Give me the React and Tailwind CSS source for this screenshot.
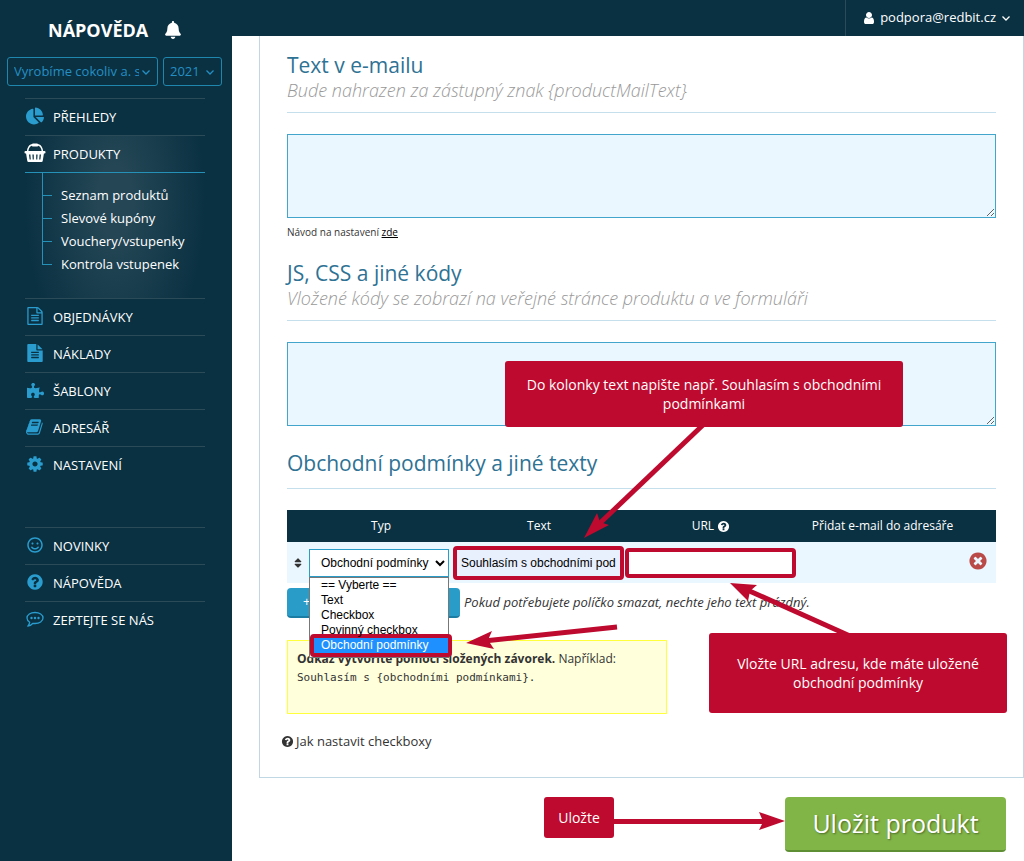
import React from 'react';
import { FaBell, FaChartPie, FaPuzzlePiece, FaRegSmile, FaSort } from 'react-icons/fa';

const Glyph = ({ d, className }) => (
  <svg viewBox="0 0 1792 1792" fill="currentColor" className={className} aria-hidden="true">
    <path d={d} />
  </svg>
);

const paths = {
  file: 'M1596 380q28 28 48 76t20 88v1152q0 40-28 68t-68 28h-1344q-40 0-68-28t-28-68v-1600q0-40 28-68t68-28h896q40 0 88 20t76 48zm-444-244v376h376q-10-29-22-41l-313-313q-12-12-41-22zm384 1528v-1024h-416q-40 0-68-28t-28-68v-416h-768v1536h1280zm-1024-864q0-14 9-23t23-9h704q14 0 23 9t9 23v64q0 14-9 23t-23 9h-704q-14 0-23-9t-9-23v-64zm736 224q14 0 23 9t9 23v64q0 14-9 23t-23 9h-704q-14 0-23-9t-9-23v-64q0-14 9-23t23-9h704zm0 256q14 0 23 9t9 23v64q0 14-9 23t-23 9h-704q-14 0-23-9t-9-23v-64q0-14 9-23t23-9h704z',
  fileSolid: 'M1596 476q14 14 28 36h-472v-472q22 14 36 28zm-476 164h544v1056q0 40-28 68t-68 28h-1344q-40 0-68-28t-28-68v-1600q0-40 28-68t68-28h800v544q0 40 28 68t68 28zm160 736v-64q0-14-9-23t-23-9h-704q-14 0-23 9t-9 23v64q0 14 9 23t23 9h704q14 0 23-9t9-23zm0-256v-64q0-14-9-23t-23-9h-704q-14 0-23 9t-9 23v64q0 14 9 23t23 9h704q14 0 23-9t9-23zm0-256v-64q0-14-9-23t-23-9h-704q-14 0-23 9t-9 23v64q0 14 9 23t23 9h704q14 0 23-9t9-23z',
  book: 'M1639 478q40 57 18 129l-275 906q-19 64-76.5 107.5t-122.5 43.5h-923q-77 0-148.5-53.5t-99.5-131.5q-24-67-2-127 0-4 3-27t4-37q1-8-3-21.5t-3-19.5q2-11 8-21t16.5-23.5 16.5-23.5q23-38 45-91.5t30-91.5q3-10 .5-30t-.5-28q3-11 17-28t17-23q21-36 42-92t25-90q1-9-2.5-32t.5-28q4-13 22-30.5t22-22.5q19-26 42.5-84.5t27.5-96.5q1-8-3-25.5t-2-26.5q2-8 9-18t18-23 17-21q8-12 16.5-30.5t15-35 16-36 19.5-32 26.5-23.5 36-11.5 47.5 5.5l-1 3q38-9 51-9h761q74 0 114 56t18 130l-274 906q-36 119-71.5 153.5t-128.5 34.5h-869q-27 0-38 15-11 16-1 43 24 70 144 70h923q29 0 56-15.5t35-41.5l300-987q7-22 5-57 38 15 59 43zm-1064 2q-4 13 2 22.5t20 9.5h608q13 0 25.5-9.5t16.5-22.5l21-64q4-13-2-22.5t-20-9.5h-608q-13 0-25.5 9.5t-16.5 22.5zm-83 256q-4 13 2 22.5t20 9.5h608q13 0 25.5-9.5t16.5-22.5l21-64q4-13-2-22.5t-20-9.5h-608q-13 0-25.5 9.5t-16.5 22.5z',
  cog: 'M1152 896q0-106-75-181t-181-75-181 75-75 181 75 181 181 75 181-75 75-181zm512-109v222q0 12-8 23t-20 13l-185 28q-19 54-39 91 35 50 107 138 10 12 10 25t-9 23q-27 37-99 108t-94 71q-12 0-26-9l-138-108q-44 23-91 38-16 136-29 186-7 28-36 28h-222q-14 0-24.5-8.5t-11.5-21.5l-28-184q-49-16-90-37l-141 107q-10 9-25 9-14 0-25-11-126-114-165-168-7-10-7-23 0-12 8-23 15-21 51-66.5t54-70.5q-27-50-41-99l-183-27q-13-2-21-12.5t-8-23.5v-222q0-12 8-23t19-13l186-28q14-46 39-92-40-57-107-138-10-12-10-24 0-10 9-23 26-36 98.5-107.5t94.5-71.5q13 0 26 10l138 107q44-23 91-38 16-136 29-186 7-28 36-28h222q14 0 24.5 8.5t11.5 21.5l28 184q49 16 90 37l142-107q9-9 24-9 13 0 25 10 129 119 165 170 7 8 7 22 0 12-8 23-15 21-51 66.5t-54 70.5q26 50 41 98l183 28q13 2 21 12.5t8 23.5z',
  question: 'M1024 1376v-192q0-14-9-23t-23-9h-192q-14 0-23 9t-9 23v192q0 14 9 23t23 9h192q14 0 23-9t9-23zm256-672q0-88-55.5-163t-138.5-116-170-41q-243 0-371 213-15 24 8 42l132 100q7 6 19 6 16 0 25-12 53-68 86-92 34-24 86-24 48 0 85.5 26t37.5 59q0 38-20 61t-68 45q-63 28-115.5 86.5t-52.5 125.5v36q0 14 9 23t23 9h192q14 0 23-9t9-23q0-19 21.5-49.5t54.5-49.5q32-18 49-28.5t46-35 44.5-48 28-60.5 12.5-81zm384 192q0 209-103 385.5t-279.5 279.5-385.5 103-385.5-103-279.5-279.5-103-385.5 103-385.5 279.5-279.5 385.5-103 385.5 103 279.5 279.5 103 385.5z',
  times: 'M1277 1122q0-26-19-45l-181-181 181-181q19-19 19-45 0-27-19-46l-90-90q-19-19-46-19-26 0-45 19l-181 181-181-181q-19-19-45-19-27 0-46 19l-90 90q-19 19-19 46 0 26 19 45l181 181-181 181q-19 19-19 45 0 27 19 46l90 90q19 19 46 19 26 0 45-19l181-181 181 181q19 19 45 19 27 0 46-19l90-90q19-19 19-46zm387-226q0 209-103 385.5t-279.5 279.5-385.5 103-385.5-103-279.5-279.5-103-385.5 103-385.5 279.5-279.5 385.5-103 385.5 103 279.5 279.5 103 385.5z',
  user: 'M1536 1399q0 109-62.5 187t-150.5 78h-854q-88 0-150.5-78t-62.5-187q0-85 8.5-160.5t31.5-152 58.5-131 94-89 134.5-34.5q131 128 313 128t313-128q76 0 134.5 34.5t94 89 58.5 131 31.5 152 8.5 160.5zm-256-887q0 159-112.5 271.5t-271.5 112.5-271.5-112.5-112.5-271.5 112.5-271.5 271.5-112.5 271.5 112.5 112.5 271.5z',
};

const Chevron = ({ className }) => (
  <svg viewBox="0 0 10 10" className={className} aria-hidden="true">
    <path d="M1.5 3.5 L5 7 L8.5 3.5" fill="none" stroke="currentColor" strokeWidth="1.3" />
  </svg>
);

const Basket = () => (
  <svg viewBox="0 0 22 20" className="w-[22px] h-5 shrink-0 text-white" aria-hidden="true">
    <path d="M3.5 9 C4 4 5.5 2.5 7.5 2 H14.5 C16.5 2.5 18 4 18.5 9" fill="none" stroke="currentColor" strokeWidth="1.5" />
    <rect x="7.5" y="0.5" width="7" height="3" rx="1.5" fill="currentColor" />
    <rect x="0.5" y="8" width="21" height="2.5" rx="1" fill="currentColor" />
    <path
      d="M2 10 H20 L18.7 18 Q18.5 19 17.5 19 H4.5 Q3.5 19 3.3 18 Z M5 11.5 L5.6 16.5 H6.8 L6.4 11.5 Z M8.4 11.5 L8.7 16.5 H9.8 V11.5 Z M12.2 11.5 V16.5 H13.3 L13.6 11.5 Z M15.6 11.5 L15.2 16.5 H16.4 L17 11.5 Z"
      fill="currentColor"
      fillRule="evenodd"
    />
  </svg>
);

const Bubble = () => (
  <svg viewBox="0 0 18 17" className="w-[18px] h-[17px]" aria-hidden="true">
    <path d="M9 1.5 C13.5 1.5 17 3.8 17 7 S13.5 12.5 9 12.5 Q8 12.5 7 12.3 Q5 14.6 1.8 15.2 Q3.4 13.5 3.7 11.2 Q1 9.6 1 7 C1 3.8 4.5 1.5 9 1.5 Z" fill="none" stroke="currentColor" strokeWidth="1.3" strokeLinejoin="round" />
    <circle cx="5.5" cy="7" r="1.2" fill="currentColor" />
    <circle cx="9" cy="7" r="1.2" fill="currentColor" />
    <circle cx="12.5" cy="7" r="1.2" fill="currentColor" />
  </svg>
);

const mainMenu = [
  { label: 'PŘEHLEDY', icon: <FaChartPie className="w-[18px] h-[18px]" /> },
  {
    label: 'PRODUKTY',
    icon: <Basket />,
    children: ['Seznam produktů', 'Slevové kupóny', 'Vouchery/vstupenky', 'Kontrola vstupenek'],
  },
  { label: 'OBJEDNÁVKY', icon: <Glyph d={paths.file} className="w-[18px] h-[18px]" /> },
  { label: 'NÁKLADY', icon: <Glyph d={paths.fileSolid} className="w-[18px] h-[18px]" /> },
  { label: 'ŠABLONY', icon: <FaPuzzlePiece className="w-[17px] h-[17px]" /> },
  { label: 'ADRESÁŘ', icon: <Glyph d={paths.book} className="w-[18px] h-[18px]" /> },
  { label: 'NASTAVENÍ', icon: <Glyph d={paths.cog} className="w-[18px] h-[18px]" /> },
];

const helpMenu = [
  { label: 'NOVINKY', icon: <FaRegSmile className="w-4 h-4" /> },
  { label: 'NÁPOVĚDA', icon: <Glyph d={paths.question} className="w-[18px] h-[18px]" /> },
  { label: 'ZEPTEJTE SE NÁS', icon: <Bubble /> },
];

const MenuItem = ({ item }) => (
  <li
    className={
      item.children
        ? 'border-t border-[#2b4b59] bg-[radial-gradient(ellipse_50%_110%_at_50%_40%,#244655_20%,#0a3142_100%)]'
        : 'border-t border-[#2b4b59]'
    }
  >
    <a href="#" className="flex h-9 items-center pt-[2px] text-[13px] text-white">
      <span className="flex w-5 mr-2 pb-1 justify-center text-[#2a9cce]">{item.icon}</span>
      {item.label}
    </a>
    {item.children && (
      <ul className="border-t border-[#2590b8] pt-[11px] pb-[22px] pl-[17px]">
        {item.children.map((child) => (
          <li
            key={child}
            className="relative pl-[19px] before:absolute before:left-0 before:bottom-1/2 before:w-[10px] before:h-[23px] before:border-l before:border-b before:border-[#2590b8]"
          >
            <a href="#" className="block text-[13px] leading-[23px] text-white">{child}</a>
          </li>
        ))}
      </ul>
    )}
  </li>
);

const HeaderSelect = ({ label, value, className }) => (
  <div className={`relative ${className}`}>
    <select
      aria-label={label}
      className="block w-full h-[29px] appearance-none rounded-[3px] border border-[#1f86ad] bg-transparent pl-[6px] pr-[18px] text-[13px] text-[#258fc4]"
    >
      <option>{value}</option>
    </select>
    <Chevron className="pointer-events-none absolute right-[7px] top-[10px] w-[10px] h-[10px] text-[#258fc4]" />
  </div>
);

const Sidebar = () => (
  <aside className="w-[232px] shrink-0 bg-[#0a3142]">
    <div className="flex h-[57px] items-center pl-12 pt-[2px] text-white">
      <strong className="text-lg">NÁPOVĚDA</strong>
      <FaBell className="ml-4 w-[18px] h-[18px]" />
    </div>
    <div className="flex gap-[5px] pl-[7px] pr-[10px]">
      <HeaderSelect label="Firma" value="Vyrobíme cokoliv a. s." className="w-[151px]" />
      <HeaderSelect label="Rok" value="2021" className="flex-1" />
    </div>
    <nav className="mt-3 ml-[25px] mr-[27px]">
      <ul>
        {mainMenu.map((item) => <MenuItem key={item.label} item={item} />)}
      </ul>
      <ul className="mt-11">
        {helpMenu.map((item) => <MenuItem key={item.label} item={item} />)}
      </ul>
    </nav>
  </aside>
);

const SectionHeading = ({ title, hint }) => (
  <div className="mb-[21px] border-b border-[#c5dfec] pb-[11px]">
    <h2 className="text-[21px] leading-7 text-[#2e7294]">{title}</h2>
    {hint && <p className="text-lg leading-[22px] font-light italic text-[#999]">{hint}</p>}
  </div>
);

const TextArea = ({ label }) => (
  <textarea aria-label={label} className="block w-full h-[84px] border border-[#42a5cc] bg-[#ebf7ff]" />
);

const options = ['== Vyberte ==', 'Text', 'Checkbox', 'Povinný checkbox', 'Obchodní podmínky'];

const TypeSelect = () => (
  <div className="relative w-[140px] font-['Liberation_Sans',Arial,sans-serif] text-xs text-black">
    <select
      aria-label="Typ"
      defaultValue="Obchodní podmínky"
      className="block w-full h-7 border border-[#2a9cc8] bg-white pl-[7px]"
    >
      {options.map((option) => <option key={option}>{option}</option>)}
    </select>
    <ul className="absolute left-0 top-7 z-10 w-[140px] border border-[#777] bg-white leading-[15px]">
      {options.slice(0, 4).map((option) => <li key={option} className="pl-[11px]">{option}</li>)}
      <li className="-mr-1 -mt-1 rounded-[4px] border-4 border-[#bd0a2e] bg-[#1e90ff] pl-[7px] text-white">{options[4]}</li>
    </ul>
  </div>
);

const TermsTable = () => (
  <table className="w-full table-fixed border-collapse text-xs">
    <colgroup>
      <col className="w-[22px]" />
      <col className="w-[144px]" />
      <col className="w-[172px]" />
      <col className="w-[172px]" />
      <col />
      <col className="w-7" />
    </colgroup>
    <thead className="bg-[#0a3142] text-white">
      <tr className="h-8">
        <th aria-label="Pořadí" />
        <th className="font-normal">Typ</th>
        <th className="font-normal">Text</th>
        <th className="font-normal">
          URL <Glyph d={paths.question} className="inline w-[13px] h-[13px]" />
        </th>
        <th className="font-normal">Přidat e-mail do adresáře</th>
        <th aria-label="Smazat" />
      </tr>
    </thead>
    <tbody className="bg-[#ebf7ff]">
      <tr className="h-[41px]">
        <td className="p-0"><FaSort className="mx-auto w-3 h-3 text-[#333]" /></td>
        <td className="p-0"><TypeSelect /></td>
        <td className="p-0">
          <input
            aria-label="Text"
            defaultValue="Souhlasím s obchodními pod"
            className="block w-[171px] h-[34px] rounded-[4px] border-4 border-[#bd0a2e] bg-[#e8f0fe] px-1 font-['Liberation_Sans',Arial,sans-serif] text-xs text-black"
          />
        </td>
        <td className="p-0">
          <input aria-label="URL" className="block w-[171px] h-[30px] rounded-[4px] border-4 border-[#bd0a2e] bg-white px-1 text-xs" />
        </td>
        <td />
        <td className="p-0 pb-1 pr-2">
          <button type="button" aria-label="Smazat řádek" className="block text-[#b94a48]">
            <Glyph d={paths.times} className="w-5 h-5" />
          </button>
        </td>
      </tr>
    </tbody>
  </table>
);

const Callout = ({ children, className }) => (
  <div
    className={`flex items-center justify-center rounded-[3px] bg-[#bd0a2e] text-center text-sm leading-[19px] text-white ${className}`}
  >
    {children}
  </div>
);

// Tutorial arrows and notes drawn over the form
const Annotations = () => (
  <div className="pointer-events-none absolute left-0 top-0 z-20">
    <svg width="792" height="700" viewBox="232 36 792 700" className="block">
      <g stroke="#bd0a2e" strokeWidth="5">
        <line x1="704" y1="424" x2="599" y2="524" />
        <line x1="617" y1="627" x2="484" y2="641" />
        <line x1="850" y1="636" x2="745" y2="589" />
      </g>
      <g fill="#bd0a2e">
        <path d="M584 538 L597 513 L600 522 L609 525 Z" />
        <path d="M466 643 L492 631 L488 640 L494 649 Z" />
        <path d="M730 583 L757 585 L750 591 L748 601 Z" />
      </g>
    </svg>
    <Callout className="absolute left-[273px] top-[325px] w-[398px] h-[66px] px-4">
      Do kolonky text napište např. Souhlasím s obchodními podmínkami
    </Callout>
    <Callout className="absolute left-[477px] top-[597px] w-[298px] h-[80px] px-5">
      Vložte URL adresu, kde máte uložené obchodní podmínky
    </Callout>
  </div>
);

const App = () => {
  return (
    <div className="flex min-h-screen bg-white font-['Open_Sans','Noto_Sans',sans-serif] text-[#333]">
      <Sidebar />
      <div className="flex-1 min-w-0">
        <header className="flex h-9 justify-end bg-[#0a3142]">
          <button type="button" className="flex items-center border-l border-[#2b4b59] pl-4 pr-[13px] text-[13px] text-white">
            <Glyph d={paths.user} className="mr-1 w-[14px] h-[14px]" />
            podpora@redbit.cz
            <Chevron className="ml-[5px] w-[10px] h-[10px]" />
          </button>
        </header>

        <main className="relative">
          <form>
            <div className="ml-[27px] border border-t-0 border-[#c0d8e4] px-[27px] pt-[15px] pb-[26px]">
              <section>
                <SectionHeading title="Text v e-mailu" hint="Bude nahrazen za zástupný znak {productMailText}" />
                <TextArea label="Text v e-mailu" />
                <p className="mt-[7px] text-[10px] leading-[14px]">
                  Návod na nastavení <a href="#" className="text-black underline">zde</a>
                </p>
              </section>

              <section className="mt-5">
                <SectionHeading title="JS, CSS a jiné kódy" hint="Vložené kódy se zobrazí na veřejné stránce produktu a ve formuláři" />
                <TextArea label="JS, CSS a jiné kódy" />
              </section>

              <section className="mt-[23px]">
                <SectionHeading title="Obchodní podmínky a jiné texty" />
                <TermsTable />
                <div className="mt-[5px] flex items-center gap-1">
                  <button type="button" className="w-[173px] h-[30px] shrink-0 rounded-[4px] border-b-2 border-[#1b7da3] bg-[#2a9cc8] pl-[16px] text-left text-[13px] text-white">
                    +
                  </button>
                  <em className="whitespace-nowrap text-[13px]">Pokud potřebujete políčko smazat, nechte jeho text prázdný.</em>
                </div>
                <div className="mt-[22px] w-[380px] h-[74px] border border-[#ffff3c] bg-[#ffffdc] px-[9px] pt-[9px] text-xs leading-[18px]">
                  <strong>Odkaz vytvoříte pomocí složených závorek.</strong> Například:
                  <br />
                  <code className="font-['DejaVu_Sans_Mono',monospace] text-[11px]">Souhlasím s {'{obchodními podmínkami}'}.</code>
                </div>
                <a href="#" className="mt-[17px] -ml-[6px] flex items-center gap-[2px] text-[13px] leading-5">
                  <Glyph d={paths.question} className="w-[13px] h-[13px]" />
                  Jak nastavit checkboxy
                </a>
              </section>
            </div>

            <div className="mt-[19px] mb-[9px] mr-[18px] flex items-start justify-end">
              <Callout className="w-[70px] h-[41px]">Uložte</Callout>
              <svg width="171" height="50" viewBox="0 0 171 50" aria-hidden="true">
                <path d="M0 22 H148 L145 15 L171 24 L145 33 L148 27 H0 Z" fill="#bd0a2e" />
              </svg>
              <button
                type="button"
                className="w-[221px] h-[55px] rounded-[4px] border-b-2 border-[#5f8f35] bg-[#82b548] text-[25px] text-white [text-shadow:1px_1px_2px_#4a6b2a]"
              >
                Uložit produkt
              </button>
            </div>
          </form>
          <Annotations />
        </main>
      </div>
    </div>
  );
};

export default App;
